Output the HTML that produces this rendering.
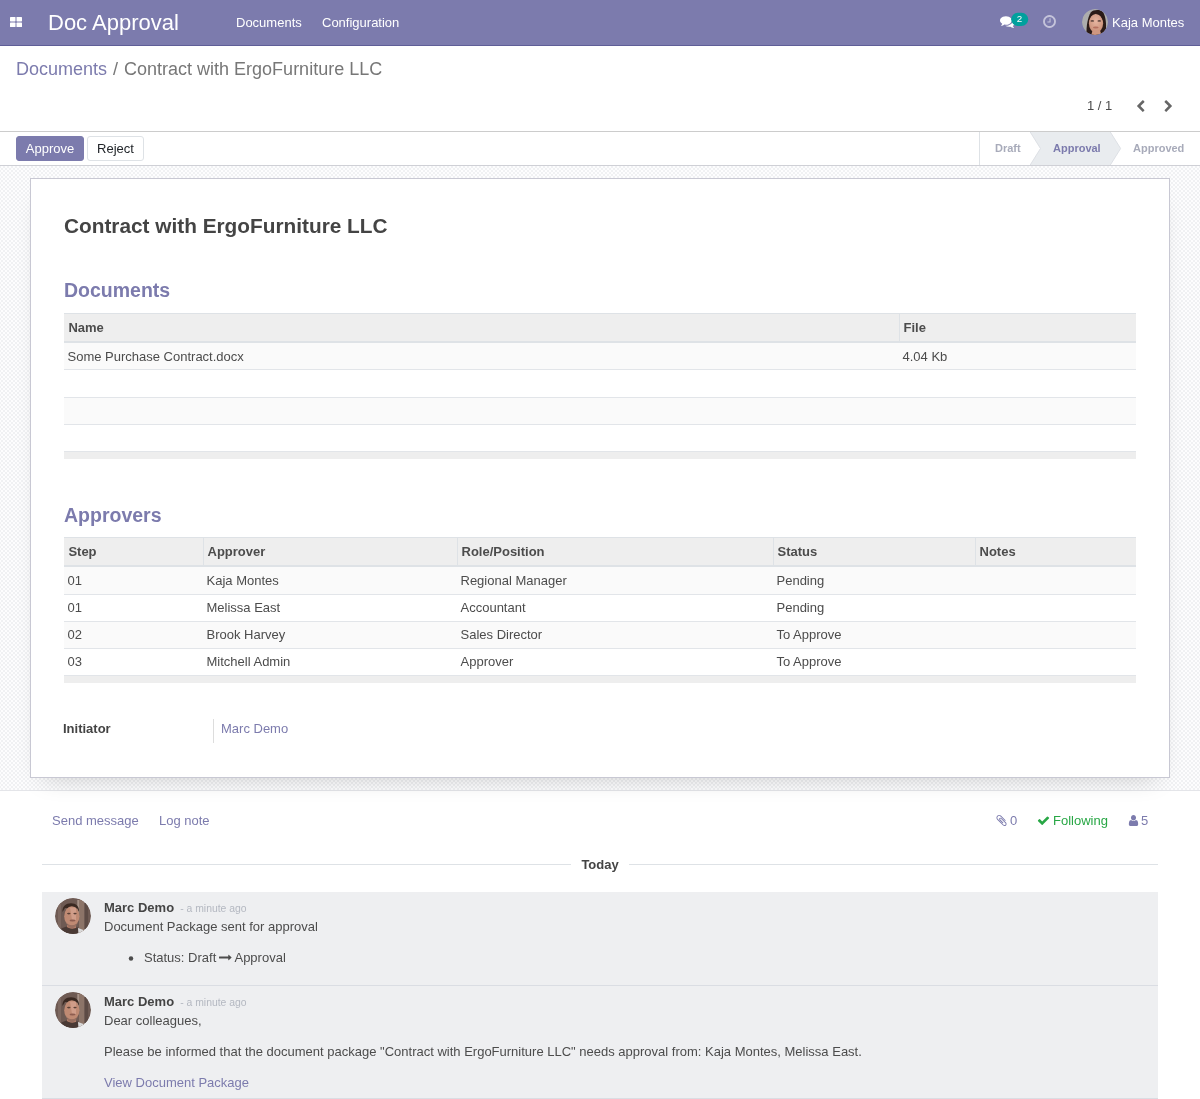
<!DOCTYPE html>
<html lang="en">
<head>
<meta charset="utf-8">
<title>Contract with ErgoFurniture LLC - Odoo</title>
<style>
*{box-sizing:border-box}
html,body{margin:0;padding:0}
body{width:1200px;height:1099px;overflow:hidden;background:#fff;font-family:"Liberation Sans",sans-serif;font-size:13px;line-height:1.5;color:#4c4c4c;position:relative}
.root{position:absolute;left:0;top:0;width:1200px;height:1099px;overflow:hidden;will-change:transform}
a{color:#7c7bad;text-decoration:none}
/* navbar */
.nav{position:absolute;left:0;top:0;width:1200px;height:46px;background:#7c7bad;border-bottom:1px solid #5f5e97;color:#fff}
.nav .apps{position:absolute;left:10px;top:17px;width:12px;height:10px}
.nav .brand{position:absolute;left:48px;top:0;height:45px;line-height:45px;font-size:22px;color:#fff;white-space:nowrap}
.nav .menu{position:absolute;top:0;height:45px;line-height:45px;font-size:13px;color:#fff;white-space:nowrap}
.nav .user{position:absolute;left:1112px;top:0;height:45px;line-height:45px;font-size:13px;color:#fff;white-space:nowrap}
.nav .avatar{position:absolute;left:1082px;top:9px;width:26px;height:26px;border-radius:50%;overflow:hidden}
.ic{position:absolute;display:block}
.badge{position:absolute;left:1011px;top:12px;width:17px;height:14px;color:#fff;font-size:9.800px;line-height:14px;text-align:center}
/* control panel */
.cp{position:absolute;left:0;top:46px;width:1200px;height:86px;background:#fff;border-bottom:1px solid #ccc}
.crumb{position:absolute;left:16px;top:10px;font-size:18px;line-height:27px;color:#777;white-space:nowrap}
.crumb a{color:#7c7bad}
.crumb .sep{padding:0 6px;color:#777}
.pager{position:absolute;left:1087px;top:50px;font-size:13px;line-height:20px;color:#4c4c4c}
/* statusbar */
.sb{position:absolute;left:0;top:132px;width:1200px;height:34px;background:#fff;border-bottom:1px solid #cfd0d6}
.btn{position:absolute;top:4px;height:25px;line-height:23px;font-size:13px;border-radius:3px;text-align:center;border:1px solid}
.btn.p{left:16px;width:68px;background:#7c7bad;border-color:#7c7bad;color:#fff}
.btn.s{left:87px;width:57px;background:#fff;border-color:#dee2e6;color:#212529}
.st{position:absolute;top:0;height:33px;line-height:33px;font-size:11px;font-weight:bold;color:#a8abba;white-space:nowrap}
/* sheet bg */
.bg{position:absolute;left:0;top:166px;width:1200px;height:625px;background:repeating-conic-gradient(#f0f1f3 0% 25%,#fdfdfe 0% 50%) 1px 0/4px 4px;border-bottom:1px solid #e4e5e9}
.sheet{position:absolute;left:30px;top:12px;width:1140px;height:600px;background:#fff;border:1px solid #c8c8d3;box-shadow:0 12px 24px -14px rgba(0,0,0,.22)}
h1{position:absolute;left:33px;top:32px;margin:0;font-size:20.8px;line-height:30px;font-weight:bold;color:#444;white-space:nowrap}
h2{position:absolute;left:33px;margin:0;font-size:19.5px;line-height:26px;font-weight:bold;color:#7c7bad;white-space:nowrap}
.tb{position:absolute;left:33px;width:1072px;font-size:13px;color:#4c4c4c}
.tb div{position:absolute}
.th{left:0;width:1072px;background:#eee;border-top:1px solid #dee2e6;border-bottom:2px solid #dee2e6}
.hc{top:1px;height:27px;line-height:27px;padding-left:3.500px;border-left:1px solid #dee2e6;font-weight:bold;color:#4c4c4c;white-space:nowrap}
.hc.f{border-left:0;padding-left:4.4px}
.tr{left:0;width:1072px}
.tr span{position:absolute;top:0;line-height:26px;white-space:nowrap}
.tr.r1 span{top:1px}
.tf{left:0;width:1072px;background:#eee;border-top:1px solid #e2e5e9}
.lbl{position:absolute;left:32px;top:540px;font-weight:bold;color:#444;line-height:20px}
.val{position:absolute;left:182px;top:540px;height:24px;border-left:1px solid #ddd;padding-left:7px;line-height:20px}
/* chatter */
.ch a,.ch span{position:absolute;white-space:nowrap;line-height:20px}
.sepline{position:absolute;top:864px;height:1px;background:#dee2e6}
.msg{position:absolute;left:42px;width:1116px;background:#eeeff1;border-bottom:1px solid #dadde3}
.msg .av{position:absolute;left:13px;top:6px;width:36px;height:36px;border-radius:50%;overflow:hidden}
.msg .t{position:absolute;left:62px;white-space:nowrap;line-height:20px;color:#4c4c4c}
.msg b{color:#444}
.bul{position:absolute;left:-18px;top:5px;width:10px;height:10px}
.msg small{font-size:10.400px;color:#b4b8c1;margin-left:2.500px}
</style>
</head>
<body>
<div class="root">
<div class="nav">
  <svg class="apps" viewBox="0 0 12 10"><rect x="0" y="0" width="5.5" height="4.4" rx=".6" fill="#fff"/><rect x="6.5" y="0" width="5.5" height="4.4" rx=".6" fill="#fff"/><rect x="0" y="5.6" width="5.5" height="4.4" rx=".6" fill="#fff"/><rect x="6.5" y="5.6" width="5.5" height="4.4" rx=".6" fill="#fff"/></svg>
  <div class="brand">Doc Approval</div>
  <div class="menu" style="left:236px">Documents</div>
  <div class="menu" style="left:322px">Configuration</div>
  <svg class="ic" style="left:999.7px;top:14px;width:15px;height:15px;fill:#fff" viewBox="0 0 1792 1792"><path d="M1408 768q0 139-94 257t-256.500 186.500-353.500 68.500q-86 0-176-16-124 88-278 128-36 9-86 16h-3q-11 0-20.500-8t-11.500-21q-1-3-1-6.500t.5-6.500 2-6l2.500-5 3.500-5.500 4-5 4.500-5 4-4.500q5-6 23-25t26-29.500 22.500-29 25-38.500 20.500-44q-124-72-195-177t-71-224q0-139 94-257t256.500-186.500 353.500-68.500 353.500 68.500 256.500 186.500 94 257zm384 256q0 120-71 224.500t-195 176.500q10 24 20.500 44t25 38.500 22.500 29 26 29.500 23 25q1 1 4 4.500t4.500 5 4 5 3.500 5.500l2.500 5 2 6 .5 6.500-1 6.500q-3 14-13 22t-22 7q-50-7-86-16-154-40-278-128-90 16-176 16-271 0-472-132 58 4 88 4 161 0 309-45t264-129q125-92 192-212t67-254q0-77-23-152 129 71 204 178t75 230z"/></svg>
  <svg class="ic" style="left:1011px;top:12px;width:18px;height:15px" viewBox="0 0 18 15"><rect x=".2" y=".7" width="17" height="13.300" rx="6.650" fill="#00a09d"/></svg>
  <div class="badge">2</div>
  <svg class="ic" style="left:1042px;top:13.8px;width:15px;height:15px;fill:#fff;opacity:.55" viewBox="0 0 1792 1792"><path d="M1024 544v448q0 14-9 23t-23 9h-320q-14 0-23-9t-9-23v-64q0-14 9-23t23-9h224v-352q0-14 9-23t23-9h64q14 0 23 9t9 23zm416 352q0-148-73-273t-198-198-273-73-273 73-198 198-73 273 73 273 198 198 273 73 273-73 198-198 73-273zm224 0q0 209-103 385.500t-279.500 279.500-385.500 103-385.500-103-279.500-279.500-103-385.500 103-385.500 279.500-279.500 385.500-103 385.500 103 279.500 279.500 103 385.500z"/></svg>
  <svg class="avatar" viewBox="0 0 26 26"><defs><clipPath id="c1"><circle cx="13" cy="13" r="13"/></clipPath><radialGradient id="g1" cx=".5" cy=".4" r=".6"><stop offset="0" stop-color="#e6b5a0"/><stop offset="1" stop-color="#c98f78"/></radialGradient></defs><g clip-path="url(#c1)"><rect width="26" height="26" fill="#adadad"/><path d="M4.500 26C4.200 18 5.500 8 9 3.200 11 .6 17 .2 20 2.200 23 4.500 24.300 12 24 19 23.500 23 21.500 26 21.500 26Z" fill="#2b1b17"/><ellipse cx="14" cy="14.300" rx="7.100" ry="9.600" fill="url(#g1)"/><path d="M9.3 26 10.5 21.5H18L19.5 26Z" fill="#cf9780"/><path d="M6.800 12.500C7 7 9.500 4.300 14 4.300 18.500 4.300 21 7 21.300 12.500 20 8 17.500 4.900 13.500 4.900 10.300 5 7.800 7.500 6.800 12.500Z" fill="#2b1b17"/><ellipse cx="10.300" cy="11.900" rx="1.800" ry=".9" fill="#4a3530" opacity=".8"/><ellipse cx="17.300" cy="11.900" rx="1.800" ry=".9" fill="#4a3530" opacity=".8"/><ellipse cx="13.800" cy="18.600" rx="2.900" ry="1" fill="#b5705f"/></g></svg>
  <div class="user">Kaja Montes</div>
</div>
<div class="cp">
  <div class="crumb"><a>Documents</a><span class="sep">/</span>Contract with ErgoFurniture LLC</div>
  <div class="pager">1 / 1</div>
  <svg class="ic" style="left:1134.1px;top:53.8px;width:13px;height:13px;fill:#666" viewBox="0 0 1792 1792"><path d="M1427 301l-531 531 531 531q19 19 19 45t-19 45l-166 166q-19 19-45 19t-45-19l-742-742q-19-19-19-45t19-45l742-742q19-19 45-19t45 19l166 166q19 19 19 45t-19 45z"/></svg>
  <svg class="ic" style="left:1162.4px;top:53.8px;width:13px;height:13px;fill:#666" viewBox="0 0 1792 1792"><path d="M1363 877l-742 742q-19 19-45 19t-45-19l-166-166q-19-19-19-45t19-45l531-531-531-531q-19-19-19-45t19-45l166-166q19-19 45-19t45 19l742 742q19 19 19 45t-19 45z"/></svg>
</div>
<div class="sb">
  <div class="btn p">Approve</div>
  <div class="btn s">Reject</div>
  <svg style="position:absolute;left:979px;top:0;width:221px;height:33px" viewBox="0 0 221 33"><path d="M.5 0V33" stroke="#dee2e6"/><path d="M51.200 0H131.300L141.600 16.500 131.300 33H51.200L61.500 16.500Z" fill="#e9ecef"/><path d="M51.200 0 61.500 16.500 51.200 33M131.300 0 141.600 16.500 131.300 33" fill="none" stroke="#dde0e5"/></svg>
  <div class="st" style="left:995px">Draft</div>
  <div class="st" style="left:1053px;color:#7c7bad">Approval</div>
  <div class="st" style="left:1133px">Approved</div>
</div>
<div class="bg">
 <div class="sheet">
  <h1>Contract with ErgoFurniture LLC</h1>
  <h2 style="top:98px">Documents</h2>
  <div class="tb" style="top:134px;height:146px">
   <div class="th" style="top:0;height:30px"></div>
   <div class="hc f" style="left:0px;width:835px">Name</div>
   <div class="hc" style="left:835px;width:237px">File</div>
   <div class="tr r1" style="top:30px;height:27px;background:#fafafa;border-bottom:1px solid #e2e5e9;">
   <span style="left:3.5px">Some Purchase Contract.docx</span>
   <span style="left:838.5px">4.04 Kb</span>
   </div>
   <div class="tr" style="top:57px;height:28px;background:#fff;border-bottom:1px solid #e2e5e9;">
   </div>
   <div class="tr" style="top:85px;height:27px;background:#fafafa;border-bottom:1px solid #e2e5e9;">
   </div>
   <div class="tr" style="top:112px;height:26px;background:#fff;">
   </div>
   <div class="tf" style="top:138px;height:8px"></div>
   </div>
  <h2 style="top:323px">Approvers</h2>
  <div class="tb" style="top:358px;height:146px">
   <div class="th" style="top:0;height:30px"></div>
   <div class="hc f" style="left:0px;width:139px">Step</div>
   <div class="hc" style="left:139px;width:254px">Approver</div>
   <div class="hc" style="left:393px;width:316px">Role/Position</div>
   <div class="hc" style="left:709px;width:202px">Status</div>
   <div class="hc" style="left:911px;width:161px">Notes</div>
   <div class="tr r1" style="top:30px;height:28px;background:#fafafa;border-bottom:1px solid #e2e5e9;">
   <span style="left:3.5px">01</span>
   <span style="left:142.5px">Kaja Montes</span>
   <span style="left:396.5px">Regional Manager</span>
   <span style="left:712.5px">Pending</span>
   </div>
   <div class="tr" style="top:58px;height:27px;background:#fff;border-bottom:1px solid #e2e5e9;">
   <span style="left:3.5px">01</span>
   <span style="left:142.5px">Melissa East</span>
   <span style="left:396.5px">Accountant</span>
   <span style="left:712.5px">Pending</span>
   </div>
   <div class="tr" style="top:85px;height:27px;background:#fafafa;border-bottom:1px solid #e2e5e9;">
   <span style="left:3.5px">02</span>
   <span style="left:142.5px">Brook Harvey</span>
   <span style="left:396.5px">Sales Director</span>
   <span style="left:712.5px">To Approve</span>
   </div>
   <div class="tr" style="top:112px;height:26px;background:#fff;">
   <span style="left:3.5px">03</span>
   <span style="left:142.5px">Mitchell Admin</span>
   <span style="left:396.5px">Approver</span>
   <span style="left:712.5px">To Approve</span>
   </div>
   <div class="tf" style="top:138px;height:8px"></div>
   </div>
  <div class="lbl">Initiator</div>
  <div class="val"><a>Marc Demo</a></div>
 </div>
</div>
<div class="ch">
  <a style="left:52px;top:811px">Send message</a>
  <a style="left:159px;top:811px">Log note</a>
  <svg class="ic" style="left:995.2px;top:814.1px;width:13px;height:13px;fill:#7c7bad" viewBox="0 0 1792 1792"><path d="M1596 1385q0 117-79 196t-196 79q-135 0-235-100l-777-776q-113-115-113-271 0-159 110-270t269-111q158 0 273 113l605 606q10 10 10 22 0 16-30.500 46.500t-46.500 30.500q-13 0-23-10l-606-607q-79-77-181-77-106 0-179 75t-73 181q0 105 76 181l776 777q63 63 145 63 64 0 106-42t42-106q0-82-63-145l-581-581q-26-24-60-24-29 0-48 19t-19 48q0 32 25 59l410 410q10 10 10 22 0 16-31 47t-47 31q-12 0-22-10l-410-410q-63-61-63-149 0-82 57-139t139-57q88 0 149 63l581 581q100 98 100 235z"/></svg>
  <svg class="ic" style="left:1037px;top:814px;width:13px;height:13px;fill:#28a745" viewBox="0 0 1792 1792"><path d="M1671 566q0 40-28 68l-724 724-136 136q-28 28-68 28t-68-28l-136-136-362-362q-28-28-28-68t28-68l136-136q28-28 68-28t68 28l294 295 656-657q28-28 68-28t68 28l136 136q28 28 28 68z"/></svg>
  <svg class="ic" style="left:1126.75px;top:813.95px;width:13px;height:13px;fill:#7c7bad" viewBox="0 0 1792 1792"><path d="M1600 1405q0 120-73 189.500t-194 69.500h-874q-121 0-194-69.500t-73-189.500q0-53 3.500-103.500t14-109 26.500-108.500 43-97.500 62-81 85.500-53.500 111.500-20q9 0 42 21.500t74.500 48 108 48 133.500 21.500 133.500-21.500 108-48 74.500-48 42-21.500q61 0 111.500 20t85.500 53.500 62 81 43 97.500 26.500 108.500 14 109 3.500 103.500zm-320-893q0 159-112.500 271.500t-271.500 112.500-271.500-112.500-112.500-271.500 112.500-271.500 271.500-112.500 271.500 112.500 112.500 271.500z" transform="translate(896 0) scale(.91 1) translate(-896 0)"/></svg>
  <a style="left:1010px;top:811px">0</a>
  <span style="left:1053px;top:811px;color:#28a745">Following</span>
  <a style="left:1141px;top:811px">5</a>
  <div class="sepline" style="left:42px;width:529px"></div>
  <div class="sepline" style="left:629px;width:529px"></div>
  <span style="left:581.400px;top:855px;font-weight:bold;color:#444">Today</span>
  <div class="msg" style="top:892px;height:94px">
    <svg class="av" viewBox="0 0 36 36"><defs><clipPath id="c2"><circle cx="18" cy="18" r="18"/></clipPath></defs><g clip-path="url(#c2)"><rect width="36" height="36" fill="#6e5a53"/><rect x="24" width="5" height="36" fill="#8c7468"/><rect x="22.300" y="2" width="1.800" height="17" fill="#a8948a"/><rect x="30" width="3" height="36" fill="#5d4b45"/><rect x="3" width="3" height="36" fill="#7d6860"/><path d="M7.500 14C7 8 11 5.200 16 5.200 21 5.200 24.500 8 24 14L22 10H10Z" fill="#3a2922"/><ellipse cx="16.800" cy="18.200" rx="7.600" ry="10" fill="#bf8a73"/><path d="M15 9.500H21V22H17Z" fill="#dcaa98" opacity=".6"/><path d="M12 27H21V32H12Z" fill="#b37d68"/><path d="M3 36C4 31 8 29.500 11.500 28.500 14 31 19 31.500 22.500 29L24 36Z" fill="#4a3a35"/><path d="M23 30 28.500 32 27 36H23.500Z" fill="#d9d9d9"/><ellipse cx="13.800" cy="15.600" rx="1.800" ry=".8" fill="#5b4036"/><ellipse cx="20" cy="15.600" rx="1.700" ry=".8" fill="#5b4036"/><ellipse cx="17.500" cy="22.500" rx="3" ry="1" fill="#8e5d50"/><path d="M11 24C13 28 20 28.500 23 24 22 28.500 19 30 17 30 14 30 12 28 11 24Z" fill="#8d6a5c" opacity=".7"/></g></svg>
    <div class="t" style="top:6px"><b>Marc Demo</b> <small>- a minute ago</small></div>
    <div class="t" style="top:25px">Document Package sent for approval</div>
    <div class="t" style="left:102px;top:56px"><svg class="bul" viewBox="0 0 10 10"><circle cx="5" cy="5.500" r="2.250" fill="#4c4c4c"/></svg>Status: Draft <svg style="display:inline-block;width:13px;height:13px;vertical-align:-2px;margin:0 -.5px 0 -.8px;fill:#4c4c4c" viewBox="0 0 1792 1792"><path d="M1728 893q0 14-10 24l-384 354q-16 14-35 6-19-9-19-29v-224h-1248q-14 0-23-9t-9-23v-192q0-14 9-23t23-9h1248v-224q0-21 19-29t35 5l384 350q10 10 10 23z"/></svg> Approval</div>
  </div>
  <div class="msg" style="top:986px;height:113px">
    <svg class="av" viewBox="0 0 36 36"><defs><clipPath id="c3"><circle cx="18" cy="18" r="18"/></clipPath></defs><g clip-path="url(#c3)"><rect width="36" height="36" fill="#6e5a53"/><rect x="24" width="5" height="36" fill="#8c7468"/><rect x="22.300" y="2" width="1.800" height="17" fill="#a8948a"/><rect x="30" width="3" height="36" fill="#5d4b45"/><rect x="3" width="3" height="36" fill="#7d6860"/><path d="M7.500 14C7 8 11 5.200 16 5.200 21 5.200 24.500 8 24 14L22 10H10Z" fill="#3a2922"/><ellipse cx="16.800" cy="18.200" rx="7.600" ry="10" fill="#bf8a73"/><path d="M15 9.500H21V22H17Z" fill="#dcaa98" opacity=".6"/><path d="M12 27H21V32H12Z" fill="#b37d68"/><path d="M3 36C4 31 8 29.500 11.500 28.500 14 31 19 31.500 22.500 29L24 36Z" fill="#4a3a35"/><path d="M23 30 28.500 32 27 36H23.500Z" fill="#d9d9d9"/><ellipse cx="13.800" cy="15.600" rx="1.800" ry=".8" fill="#5b4036"/><ellipse cx="20" cy="15.600" rx="1.700" ry=".8" fill="#5b4036"/><ellipse cx="17.500" cy="22.500" rx="3" ry="1" fill="#8e5d50"/><path d="M11 24C13 28 20 28.500 23 24 22 28.500 19 30 17 30 14 30 12 28 11 24Z" fill="#8d6a5c" opacity=".7"/></g></svg>
    <div class="t" style="top:6px"><b>Marc Demo</b> <small>- a minute ago</small></div>
    <div class="t" style="top:25px">Dear colleagues,</div>
    <div class="t" style="top:56px">Please be informed that the document package "Contract with ErgoFurniture LLC" needs approval from: Kaja Montes, Melissa East.</div>
    <div class="t" style="top:87px"><a>View Document Package</a></div>
  </div>
</div>
</div>
</body>
</html>
